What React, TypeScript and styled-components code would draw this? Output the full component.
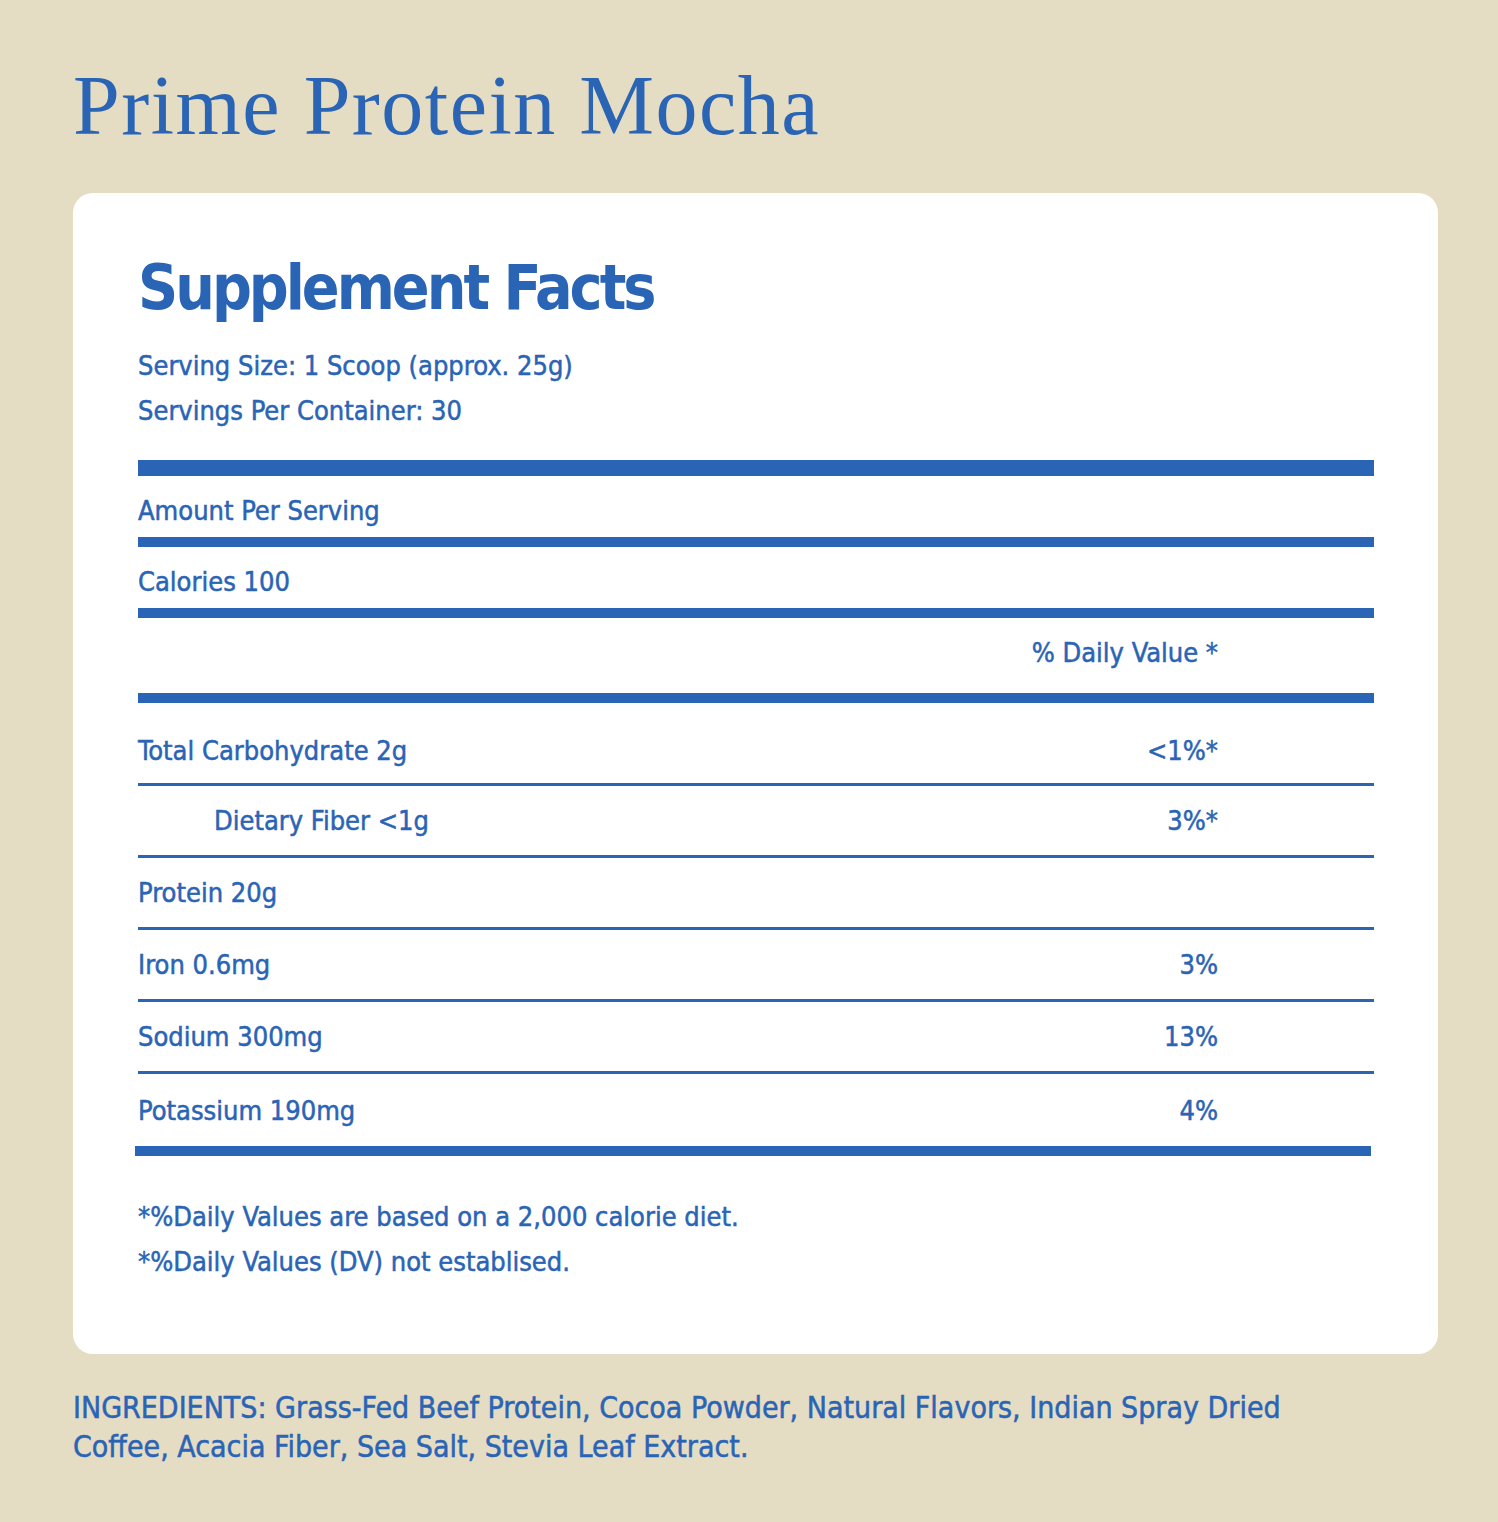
import styled, { createGlobalStyle } from "styled-components";

const BLUE = "#2a64b5";

const GlobalStyle = createGlobalStyle`
  html, body {
    margin: 0;
    padding: 0;
    background: #e5dcc4;
  }
  body {
    font-family: "DejaVu Sans", sans-serif;
    font-stretch: condensed;
    color: ${BLUE};
  }
`;

type Nutrient = {
  label: string;
  value?: string;
  indent?: boolean;
};

const nutrients: Nutrient[] = [
  { label: "Total Carbohydrate 2g", value: "<1%*" },
  { label: "Dietary Fiber <1g", value: "3%*", indent: true },
  { label: "Protein 20g" },
  { label: "Iron 0.6mg", value: "3%" },
  { label: "Sodium 300mg", value: "13%" },
  { label: "Potassium 190mg", value: "4%" },
];

const App = () => {
  return (
    <Page>
      <GlobalStyle />
      <Title>Prime Protein Mocha</Title>
      <Card>
        <FactsTitle>Supplement Facts</FactsTitle>
        <Serving>
          <p>Serving Size: 1 Scoop (approx. 25g)</p>
          <p>Servings Per Container: 30</p>
        </Serving>
        <Rule thickness={16} />
        <HeadRow>Amount Per Serving</HeadRow>
        <Rule thickness={10} />
        <HeadRow>Calories 100</HeadRow>
        <Rule thickness={10} />
        <DailyHead>
          <span>% Daily Value *</span>
        </DailyHead>
        <Rule thickness={10} />
        <Rows>
          {nutrients.map((n, i) => (
            <Row key={n.label} first={i === 0} last={i === nutrients.length - 1}>
              <Label indent={n.indent}>{n.label}</Label>
              <Value>{n.value}</Value>
            </Row>
          ))}
        </Rows>
        <Rule thickness={10} shift />
        <Notes>
          <p>*%Daily Values are based on a 2,000 calorie diet.</p>
          <p>*%Daily Values (DV) not establised.</p>
        </Notes>
      </Card>
      <Ingredients>
        INGREDIENTS: Grass-Fed Beef Protein, Cocoa Powder, Natural Flavors, Indian Spray Dried
        Coffee, Acacia Fiber, Sea Salt, Stevia Leaf Extract.
      </Ingredients>
    </Page>
  );
};

export default App;

const Page = styled.div`
  padding: 61px 60px 56px 73px;
  min-height: 1522px;
  box-sizing: border-box;
`;

const Title = styled.h1`
  font-family: "Liberation Serif", "DejaVu Serif", serif;
  font-stretch: normal;
  font-weight: 400;
  font-size: 84px;
  letter-spacing: 1.5px;
  line-height: 90px;
  margin: 0 0 42px 0;
  color: ${BLUE};
`;

const Card = styled.div`
  background: #ffffff;
  border-radius: 20px;
  padding: 50px 64px 70px 65px;
`;

const FactsTitle = styled.h2`
  font-size: 62px;
  font-weight: 700;
  letter-spacing: -3px;
  line-height: 90px;
  margin: 0 0 10px 0;
`;

const bodyText = `
  font-size: 27px;
  -webkit-text-stroke: 0.5px ${BLUE};
`;

const Serving = styled.div`
  margin-bottom: 27px;

  p {
    margin: 0;
    ${bodyText}
    line-height: 45px;
  }
`;

const Rule = styled.div<{ thickness: number; shift?: boolean }>`
  height: ${({ thickness }) => thickness}px;
  background: ${BLUE};
  margin-left: ${({ shift }) => (shift ? "-3px" : "0")};
  margin-right: ${({ shift }) => (shift ? "3px" : "0")};
`;

const HeadRow = styled.div`
  ${bodyText}
  height: 61px;
  box-sizing: border-box;
  padding-top: 8px;
  line-height: 53px;
`;

const DailyHead = styled.div`
  ${bodyText}
  display: flex;
  justify-content: flex-end;
  height: 75px;
  padding-right: 156px;
  line-height: 70px;
`;

const Rows = styled.div`
  display: flex;
  flex-direction: column;
`;

const Row = styled.div<{ first?: boolean; last?: boolean }>`
  ${bodyText}
  display: flex;
  justify-content: space-between;
  align-items: center;
  height: ${({ first }) => (first ? 83 : 72)}px;
  padding-top: ${({ first }) => (first ? 14 : 0)}px;
  padding-right: 156px;
  box-sizing: border-box;
  border-bottom: ${({ last }) => (last ? "none" : `3px solid ${BLUE}`)};
`;

const Label = styled.span<{ indent?: boolean }>`
  padding-left: ${({ indent }) => (indent ? 76 : 0)}px;
`;

const Value = styled.span`
  text-align: right;
`;

const Notes = styled.div`
  padding-top: 38px;

  p {
    margin: 0;
    ${bodyText}
    line-height: 45px;
  }
`;

const Ingredients = styled.p`
  margin: 34px 0 0 0;
  max-width: 1260px;
  font-size: 30px;
  -webkit-text-stroke: 0.5px ${BLUE};
  line-height: 39px;
`;
